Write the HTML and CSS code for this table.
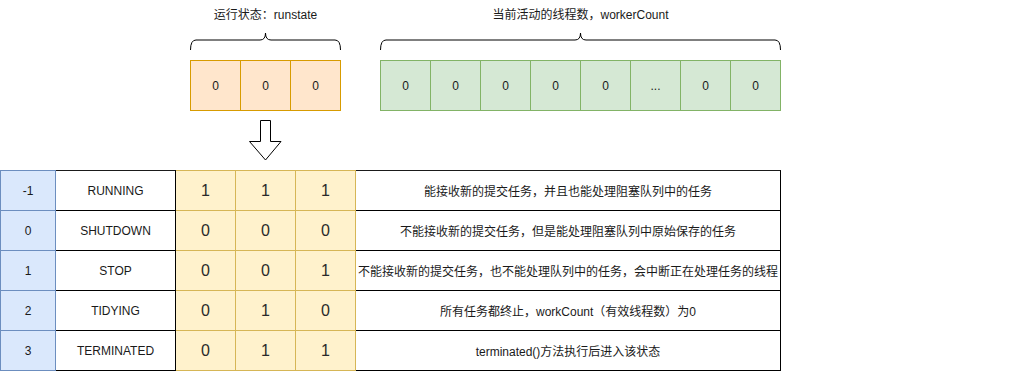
FILE: index.html
```html
<!DOCTYPE html>
<html lang="zh-CN">
<head>
<meta charset="utf-8">
<title>线程池状态</title>
<link rel="stylesheet" href="styles.css">
</head>
<body>
<div class="diagram">
  <div class="top">
    <div class="group group-run">
      <div class="label">运行状态：runstate</div>
      <svg class="brace" width="151" height="30" viewBox="0 0 151 30">
        <path d="M0.5,20 Q0.5,10 6,10 L70,10 Q75.5,10 75.5,3 Q75.5,10 81,10 L145,10 Q150.5,10 150.5,20" fill="none" stroke="#000" stroke-width="1"/>
      </svg>
      <div class="boxes boxes-run">
        <div class="box">0</div>
        <div class="box">0</div>
        <div class="box">0</div>
      </div>
    </div>
    <div class="group group-work">
      <div class="label">当前活动的线程数，workerCount</div>
      <svg class="brace" width="401" height="30" viewBox="0 0 401 30">
        <path d="M0.5,20 Q0.5,10 6,10 L195,10 Q200.5,10 200.5,3 Q200.5,10 206,10 L395,10 Q400.5,10 400.5,20" fill="none" stroke="#000" stroke-width="1"/>
      </svg>
      <div class="boxes boxes-work">
        <div class="box">0</div>
        <div class="box">0</div>
        <div class="box">0</div>
        <div class="box">0</div>
        <div class="box">0</div>
        <div class="box">...</div>
        <div class="box">0</div>
        <div class="box">0</div>
      </div>
    </div>
  </div>

  <svg class="arrow" width="35" height="43" viewBox="0 0 35 43">
    <polygon points="12.5,1.5 22.5,1.5 22.5,22.5 33,22.5 17.5,41 1.5,22.5 12.5,22.5" fill="#fff" stroke="#000" stroke-width="1"/>
  </svg>

  <div class="states">
    <div class="cell c-val first">-1</div>
    <div class="cell c-name">RUNNING</div>
    <div class="cell c-bit">1</div>
    <div class="cell c-bit">1</div>
    <div class="cell c-bit">1</div>
    <div class="cell c-desc">能接收新的提交任务，并且也能处理阻塞队列中的任务</div>

    <div class="cell c-val">0</div>
    <div class="cell c-name">SHUTDOWN</div>
    <div class="cell c-bit">0</div>
    <div class="cell c-bit">0</div>
    <div class="cell c-bit">0</div>
    <div class="cell c-desc">不能接收新的提交任务，但是能处理阻塞队列中原始保存的任务</div>

    <div class="cell c-val">1</div>
    <div class="cell c-name">STOP</div>
    <div class="cell c-bit">0</div>
    <div class="cell c-bit">0</div>
    <div class="cell c-bit">1</div>
    <div class="cell c-desc">不能接收新的提交任务，也不能处理队列中的任务，会中断正在处理任务的线程</div>

    <div class="cell c-val">2</div>
    <div class="cell c-name">TIDYING</div>
    <div class="cell c-bit">0</div>
    <div class="cell c-bit">1</div>
    <div class="cell c-bit">0</div>
    <div class="cell c-desc">所有任务都终止，workCount（有效线程数）为0</div>

    <div class="cell c-val">3</div>
    <div class="cell c-name">TERMINATED</div>
    <div class="cell c-bit">0</div>
    <div class="cell c-bit">1</div>
    <div class="cell c-bit">1</div>
    <div class="cell c-desc">terminated()方法执行后进入该状态</div>
  </div>
</div>
</body>
</html>
```

FILE: styles.css
```css
* { box-sizing: border-box; }

html, body {
  margin: 0;
  padding: 0;
  background: #fff;
}

body {
  font-family: "Liberation Sans", "Noto Sans CJK SC", sans-serif;
  font-size: 12px;
  color: #1a1a1a;
  width: 1031px;
  height: 371px;
  overflow: hidden;
}

.diagram {
  display: flex;
  flex-direction: column;
}

.top {
  display: flex;
  gap: 39px;
  padding-left: 190px;
}

.group {
  display: flex;
  flex-direction: column;
}

.group-run { width: 151px; }
.group-work { width: 401px; }

.label {
  height: 30px;
  line-height: 30px;
  text-align: center;
  white-space: nowrap;
}

.brace { display: block; }

.boxes {
  display: flex;
  height: 51px;
  border-top: 1px solid;
  border-bottom: 1px solid;
  border-left: 1px solid;
}

.box {
  width: 50px;
  display: flex;
  align-items: center;
  justify-content: center;
  border-right: 1px solid;
}

.boxes-run { background: #ffe6cc; border-color: #d79b00; }
.boxes-run .box { border-color: #d79b00; }

.boxes-work { background: #d5e8d4; border-color: #82b366; }
.boxes-work .box { border-color: #82b366; }

.arrow {
  display: block;
  margin-top: 8px;
  margin-left: 248px;
}

.states {
  margin-top: 8px;
  display: grid;
  grid-template-columns: 56px 120px 60px 60px 60px 425px;
  grid-template-rows: 41px repeat(4, 40px);
}

.cell {
  display: flex;
  align-items: center;
  justify-content: center;
  border-right: 1px solid #000;
  border-bottom: 1px solid #000;
  white-space: nowrap;
}

.states > .cell:nth-child(-n+6) { border-top: 1px solid; }

.c-val {
  background: #dae8fc;
  border-color: #6c8ebf;
  border-left: 1px solid #6c8ebf;
}
.states > .c-val:nth-child(-n+6) { border-top-color: #6c8ebf; }

.c-name {
  border-color: #000;
}

.c-bit {
  background: #fff2cc;
  border-color: #d6b656;
  font-size: 16px;
  color: #2a2a2a;
}
.states > .c-bit:nth-child(-n+6) { border-top-color: #d6b656; }

.c-desc {
  border-color: #000;
  padding: 0;
}
```
